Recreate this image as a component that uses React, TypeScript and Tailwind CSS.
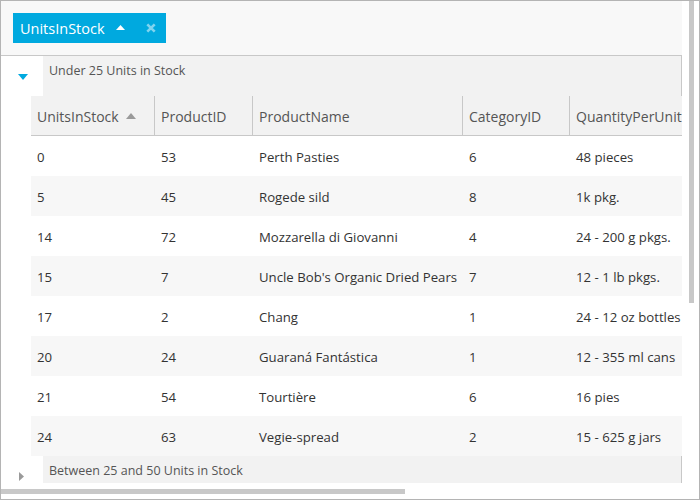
import React from "react";

const rows = [
  ["0", "53", "Perth Pasties", "6", "48 pieces"],
  ["5", "45", "Rogede sild", "8", "1k pkg."],
  ["14", "72", "Mozzarella di Giovanni", "4", "24 - 200 g pkgs."],
  ["15", "7", "Uncle Bob's Organic Dried Pears", "7", "12 - 1 lb pkgs."],
  ["17", "2", "Chang", "1", "24 - 12 oz bottles"],
  ["20", "24", "Guaraná Fantástica", "1", "12 - 355 ml cans"],
  ["21", "54", "Tourtière", "6", "16 pies"],
  ["24", "63", "Vegie-spread", "2", "15 - 625 g jars"],
];

const widths = ["w-[123px]", "w-[98px]", "w-[210px]", "w-[107px]", "w-[160px]"];
const headers = ["UnitsInStock", "ProductID", "ProductName", "CategoryID", "QuantityPerUnit"];

export default function App() {
  return (
    <div
      className="w-[700px] h-[500px] border border-[#b4b4b4] bg-white flex overflow-hidden text-[#333]"
      style={{ fontFamily: '"Open Sans", "Noto Sans", sans-serif' }}
    >
      <div className="w-[681px] flex flex-col shrink-0">
        {/* group panel */}
        <div className="h-[55px] bg-[#f8f8f8] border-b border-[#c8c8c8] pl-[12px] pt-[12px] shrink-0">
          <div className="w-[153px] h-[30px] bg-[#00a9df] flex items-center pl-[7px] text-white text-[14.5px]">
            <span className="w-[96px] whitespace-nowrap pt-[2px]">UnitsInStock</span>
            <svg width="9" height="5" viewBox="0 0 9 5" className="mt-[-1px]">
              <polygon points="0,5 4.5,0 9,5" fill="#ffffff" />
            </svg>
            <svg width="10" height="10" viewBox="0 0 10 10" className="ml-[21px]">
              <path d="M1.3 1.3 L8.7 8.7 M8.7 1.3 L1.3 8.7" stroke="#80d4ef" strokeWidth="2.6" />
            </svg>
          </div>
        </div>
        {/* viewport */}
        <div className="h-[427px] overflow-hidden shrink-0">
          {/* group 1 */}
          <div className="h-[40px] flex">
            <div className="w-[42px] flex items-center justify-center pl-[2px] pt-[1px]">
              <svg width="10" height="6" viewBox="0 0 10 6">
                <polygon points="0,0 10,0 5,6" fill="#00a9df" />
              </svg>
            </div>
            <div className="flex-1 bg-[#f2f2f2] border-r border-[#c8c8c8] pl-[6px] pt-[6px] text-[12.5px] text-[#555]">
              Under 25 Units in Stock
            </div>
          </div>
          {/* column headers */}
          <div className="ml-[30px] h-[40px] flex bg-[#f2f2f2] border-b border-[#c8c8c8] whitespace-nowrap overflow-hidden">
            {headers.map((h, i) => (
              <div
                key={h}
                className={`${widths[i]} shrink-0 flex items-center pl-[6px] text-[14px] text-[#555] ${i > 0 ? "border-l border-[#c8c8c8]" : ""}`}
              >
                <span className="pt-[2px]">{h}</span>
                {i === 0 && (
                  <svg width="10" height="6" viewBox="0 0 10 6" className="ml-[7px]">
                    <polygon points="0,6 5,0 10,6" fill="#9a9a9a" />
                  </svg>
                )}
              </div>
            ))}
          </div>
          {/* rows */}
          <div className="ml-[30px] overflow-hidden">
            {rows.map((r, ri) => (
              <div
                key={ri}
                className={`h-[40px] flex whitespace-nowrap ${ri % 2 === 1 ? "bg-[#f7f7f7]" : "bg-white"}`}
              >
                {r.map((c, ci) => (
                  <div
                    key={ci}
                    className={`${widths[ci]} shrink-0 flex items-center pt-[3px] text-[13.2px] overflow-hidden ${ci === 0 ? "pl-[6px]" : "pl-[7px]"}`}
                  >
                    {c}
                  </div>
                ))}
              </div>
            ))}
          </div>
          {/* group 2 */}
          <div className="h-[40px] flex">
            <div className="w-[42px] flex items-center justify-center pr-[2px]">
              <svg width="5" height="9" viewBox="0 0 5 9">
                <polygon points="0,0 5,4.5 0,9" fill="#9a9a9a" />
              </svg>
            </div>
            <div className="flex-1 bg-[#f2f2f2] border-r border-[#c8c8c8] pl-[6px] pt-[6px] text-[12.5px] text-[#555]">
              Between 25 and 50 Units in Stock
            </div>
          </div>
        </div>
        {/* horizontal scrollbar */}
        <div className="h-[17px] pt-[6px] shrink-0">
          <div className="w-[404px] h-[5px] bg-[#c8c8c8]" />
        </div>
      </div>
      <div className="w-[17px] shrink-0 pl-[7px]">
        <div className="w-[5px] h-[302px] bg-[#c8c8c8]" />
      </div>
    </div>
  );
}
